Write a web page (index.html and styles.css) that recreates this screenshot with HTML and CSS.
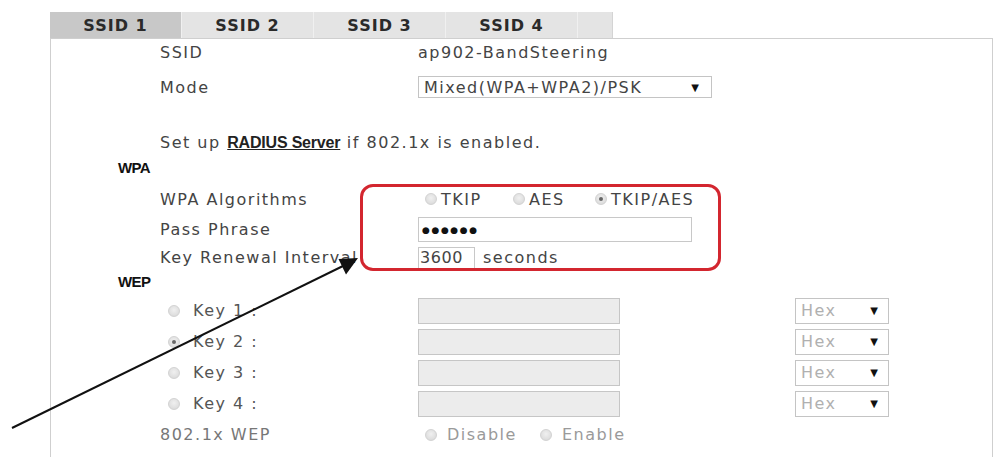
FILE: index.html
```html
<!DOCTYPE html>
<html>
<head>
<meta charset="utf-8">
<link rel="stylesheet" href="styles.css">
</head>
<body>
<div class="page">
  <div class="tabs">
    <div class="tab active">SSID 1</div>
    <div class="tab">SSID 2</div>
    <div class="tab">SSID 3</div>
    <div class="tab">SSID 4</div>
    <div class="tab-fill"></div>
  </div>
  <div class="panel">
    <div class="row r-ssid"><span class="label">SSID</span><span class="value">ap902-BandSteering</span></div>
    <div class="row r-mode"><span class="label">Mode</span>
      <div class="select mode-select"><span>Mixed(WPA+WPA2)/PSK</span><span class="caret">▼</span></div>
    </div>
    <div class="row r-blank"></div>
    <div class="row r-setup"><span class="setup">Set up <a class="radius">RADIUS Server</a> if 802.1x is enabled.</span></div>
    <div class="row r-head r-wpa"><span class="heading">WPA</span></div>
    <div class="row r-alg"><span class="label">WPA Algorithms</span>
      <div class="opts">
        <label class="opt opt-tkip"><span class="radio"></span>TKIP</label>
        <label class="opt opt-aes"><span class="radio"></span>AES</label>
        <label class="opt"><span class="radio checked"></span>TKIP/AES</label>
      </div>
    </div>
    <div class="row r-pass"><span class="label">Pass Phrase</span><div class="input pass">●●●●●●</div></div>
    <div class="row r-renew"><span class="label">Key Renewal Interval</span><div class="input renew">3600</div><span class="unit">seconds</span></div>
    <div class="row r-head r-wep"><span class="heading">WEP</span></div>
    <div class="row r-key"><span class="keylabel"><span class="radio"></span>Key 1 :</span><div class="input key"></div><div class="select hex"><span>Hex</span><span class="caret">▼</span></div></div>
    <div class="row r-key"><span class="keylabel"><span class="radio checked"></span>Key 2 :</span><div class="input key"></div><div class="select hex"><span>Hex</span><span class="caret">▼</span></div></div>
    <div class="row r-key"><span class="keylabel"><span class="radio"></span>Key 3 :</span><div class="input key"></div><div class="select hex"><span>Hex</span><span class="caret">▼</span></div></div>
    <div class="row r-key"><span class="keylabel"><span class="radio"></span>Key 4 :</span><div class="input key"></div><div class="select hex"><span>Hex</span><span class="caret">▼</span></div></div>
    <div class="row r-8021x"><span class="label muted">802.1x WEP</span>
      <div class="opts">
        <label class="opt disabled opt-dis"><span class="radio"></span>Disable</label>
        <label class="opt disabled opt-en"><span class="radio"></span>Enable</label>
      </div>
    </div>
  </div>
  <div class="highlight"></div>
  <svg class="arrow" width="996" height="457" viewBox="0 0 996 457">
    <line x1="12" y1="428" x2="343" y2="266" stroke="#111" stroke-width="2"/>
    <polygon points="358,258 346,274.5 338.5,259" fill="#111"/>
  </svg>
</div>
</body>
</html>
```

FILE: styles.css
```css
* { box-sizing: border-box; }
html, body { margin: 0; padding: 0; background: #fff; }
body {
  font-family: "DejaVu Sans", Verdana, sans-serif;
  font-size: 16px;
  letter-spacing: 1.5px;
  color: #444;
  width: 996px;
  height: 457px;
  overflow: hidden;
}
.page { position: relative; padding: 12px 0 0 50px; }

.tabs { display: flex; width: 563px; height: 26px; }
.tab {
  width: 132px;
  height: 26px;
  background: #e4e4e4;
  border-right: 1px solid #f0f0f0;
  font-weight: bold;
  font-size: 16px;
  letter-spacing: 1px;
  color: #2a2a2a;
  display: flex;
  align-items: center;
  justify-content: center;
}
.tab.active { background: #c8c8c8; }
.tab-fill { flex: 1; background: #e4e4e4; border-right: 1px solid #d4d4d4; }

.panel {
  width: 943px;
  height: 430px;
  border: 1px solid #cfcfcf;
  border-bottom: none;
}
.row { display: flex; align-items: center; padding-left: 109px; }
.label { width: 258px; white-space: nowrap; }
.value { color: #444; }

.r-ssid { height: 27px; }
.r-mode { height: 42px; }
.r-blank { height: 20px; }
.r-setup { height: 28px; }
.r-head { padding-left: 67px; }
.r-wpa { height: 26px; padding-bottom: 3px; }
.r-alg { height: 34px; }
.r-pass { height: 27px; }
.r-renew { height: 29px; }
.r-wep { height: 23px; padding-bottom: 4px; }
.r-key { height: 31px; padding-left: 117px; }
.r-8021x { height: 31px; }

.heading {
  font-family: "Liberation Sans", Arial, sans-serif;
  font-weight: bold;
  font-size: 15px;
  letter-spacing: -0.6px;
  color: #111;
}
.radius {
  font-family: "Liberation Sans", Arial, sans-serif;
  font-weight: bold;
  font-size: 16px;
  letter-spacing: -0.2px;
  color: #222;
  text-decoration: underline;
}

.select {
  display: flex;
  align-items: center;
  justify-content: space-between;
  background: #fff;
  border: 1px solid #c4c4c4;
  padding: 0 12px 0 5px;
}
.mode-select { width: 294px; height: 22px; color: #444; }
.caret { font-size: 10px; color: #111; letter-spacing: 0; }

.opts { display: flex; align-items: center; }
.opt { display: flex; align-items: center; }
.opt-tkip { width: 88px; margin-left: 7px; }
.opt-aes { width: 82px; }
.opt-dis { width: 115px; margin-left: 7px; }
.opt.disabled { color: #9a9a9a; }
.opt.disabled .radio { margin-right: 10px; }

.radio {
  width: 12px;
  height: 12px;
  border-radius: 50%;
  background: radial-gradient(circle at 50% 40%, #f0f0f0, #d6d6d6);
  border: 1px solid #d2d2d2;
  margin-right: 4px;
  display: inline-flex;
  align-items: center;
  justify-content: center;
  flex: none;
}
.radio.checked::after {
  content: "";
  width: 4px;
  height: 4px;
  border-radius: 50%;
  background: #666;
}

.input {
  border: 1px solid #c8c8c8;
  background: #fff;
  display: flex;
  align-items: center;
  padding-left: 1px;
}
.pass { width: 274px; height: 25px; font-size: 9px; letter-spacing: 1.6px; color: #111; padding-left: 3px; }
.renew { width: 57px; height: 22px; letter-spacing: 0.6px; }
.unit { margin-left: 8px; }

.keylabel { width: 250px; display: flex; align-items: center; color: #555; }
.keylabel .radio { margin-right: 13px; }
.key { width: 202px; height: 26px; background: #ececec; border-color: #c6c6c6; }
.hex { width: 94px; height: 26px; margin-left: 175px; color: #b0b0b0; padding-right: 10px; }

.muted { color: #777; }

.highlight {
  position: absolute;
  left: 360px;
  top: 184px;
  width: 361px;
  height: 87px;
  border: 3px solid #d3262f;
  border-radius: 13px;
}
.arrow { position: absolute; left: 0; top: 0; pointer-events: none; }
```
